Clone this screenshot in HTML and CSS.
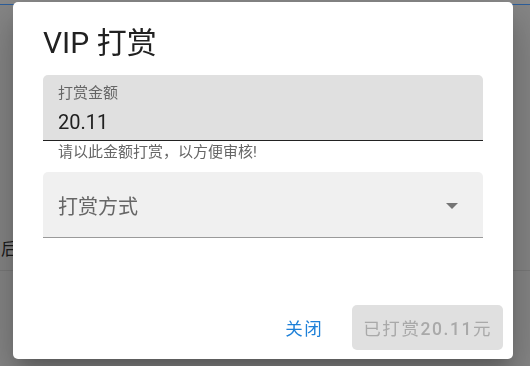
FILE: index.html
```html
<!DOCTYPE html>
<html lang="zh-CN">
<head>
<meta charset="utf-8">
<title>VIP 打赏</title>
<link rel="stylesheet" href="styles.css">
</head>
<body>
<div class="page">
  <div class="appbar"></div>
  <div class="row"><span class="row-text">后</span></div>
</div>
<div class="dialog">
  <div class="dialog-title">VIP 打赏</div>
  <div class="dialog-body">
    <div class="field field-filled">
      <div class="field-label">打赏金额</div>
      <div class="field-value">20.11</div>
    </div>
    <div class="field-hint">请以此金额打赏，以方便审核!</div>
    <div class="field field-select">
      <div class="select-label">打赏方式</div>
      <svg class="select-arrow" width="12" height="6" viewBox="0 0 12 6"><polygon points="0,0 12,0 6,6" fill="#757575"/></svg>
    </div>
  </div>
  <div class="dialog-actions">
    <button class="btn btn-text">关闭</button>
    <button class="btn btn-disabled" disabled>已打赏<span class="btn-num">20.11</span>元</button>
  </div>
</div>
</body>
</html>
```
FILE: styles.css
```css
html, body {
  margin: 0;
  padding: 0;
}
body {
  background: #878787;
  font-family: Roboto, "Noto Sans CJK SC", sans-serif;
  width: 530px;
  height: 366px;
  overflow: hidden;
}
.page {
  display: flex;
  flex-direction: column;
}
.appbar {
  height: 4px;
  background: #8b8b8b;
  border-bottom: 1px solid #2d5f9c;
}
.row {
  margin-top: 220px;
  height: 45px;
  display: flex;
  align-items: center;
  border-bottom: 1px solid #7b7b7b;
}
.row-text {
  font-size: 17px;
  color: #1a1a1a;
  padding-left: 1px;
}
.dialog {
  position: fixed;
  top: 2px;
  left: 13px;
  width: 500px;
  height: 357px;
  background: #fff;
  border-radius: 5px;
  display: flex;
  flex-direction: column;
  box-shadow: 0 11px 15px -7px rgba(0,0,0,.2), 0 24px 38px 3px rgba(0,0,0,.14), 0 9px 46px 8px rgba(0,0,0,.12);
}
.dialog-title {
  padding: 21px 30px 0;
  font-size: 30px;
  line-height: 40px;
  color: #212121;
}
.dialog-body {
  padding: 0 30px;
  margin-top: 12px;
  display: flex;
  flex-direction: column;
}
.field {
  border-radius: 5px 5px 0 0;
  padding: 0 15px;
}
.field-filled {
  background: #e0e0e0;
  padding-top: 8px;
  padding-bottom: 5px;
  border-bottom: 1px solid #222;
}
.field-label {
  font-size: 15px;
  line-height: 20px;
  color: #666;
}
.field-value {
  margin-top: 6px;
  font-size: 20px;
  line-height: 26px;
  color: #212121;
}
.field-hint {
  margin-top: 2px;
  padding-left: 15px;
  font-size: 15px;
  line-height: 18px;
  color: #666;
}
.field-select {
  margin-top: 11px;
  background: #f0f0f0;
  padding-top: 22px;
  padding-bottom: 17px;
  border-bottom: 1px solid #9a9a9a;
  display: flex;
  align-items: center;
  justify-content: space-between;
}
.select-label {
  font-size: 20px;
  line-height: 26px;
  color: #666;
}
.select-arrow {
  margin-right: 10px;
  margin-top: -3px;
}
.dialog-actions {
  margin-top: auto;
  padding: 0 10px 9px;
  display: flex;
  justify-content: flex-end;
  align-items: center;
  gap: 9px;
}
.btn {
  height: 45px;
  border: 0;
  border-radius: 5px;
  font-family: Roboto, "Noto Sans CJK SC", sans-serif;
  font-size: 17.5px;
  font-weight: 400;
  letter-spacing: 1.56px;
  background: transparent;
  padding: 0 20px;
  white-space: nowrap;
  cursor: pointer;
}
.btn-num {
  font-weight: 500;
}
.btn-text {
  color: #1e80d8;
}
.btn-disabled {
  background: #e0e0e0;
  color: #a9a9a9;
  padding: 0 11px;
}
```
